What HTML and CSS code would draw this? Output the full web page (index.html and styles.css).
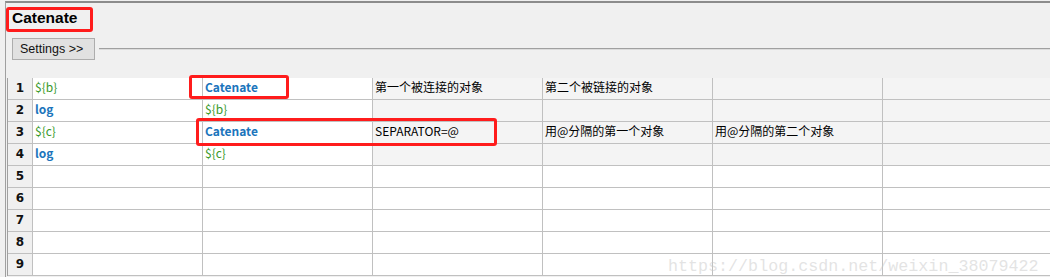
FILE: index.html
```html
<!DOCTYPE html>
<html lang="en">
  <head>
    <meta charset="UTF-8" />
    <title>Catenate</title>
    <link rel="stylesheet" href="styles.css">
  </head>
  <body>
    <div class="panel">
      <h1 class="title">Catenate</h1>

      <div class="settings-row">
        <button class="settings-btn">Settings &gt;&gt;</button>
        <div class="separator"></div>
      </div>

      <!-- Test steps grid -->
      <div class="grid">
        <div class="num">1</div>
        <div class="cell var">${b}</div>
        <div class="cell kw">Catenate</div>
        <div class="cell dim">第一个被连接的对象</div>
        <div class="cell dim">第二个被链接的对象</div>
        <div class="cell dim"></div>
        <div class="cell dim"></div>

        <div class="num">2</div>
        <div class="cell kw">log</div>
        <div class="cell var">${b}</div>
        <div class="cell dim"></div>
        <div class="cell dim"></div>
        <div class="cell dim"></div>
        <div class="cell dim"></div>

        <div class="num">3</div>
        <div class="cell var">${c}</div>
        <div class="cell kw">Catenate</div>
        <div class="cell dim">SEPARATOR=@</div>
        <div class="cell dim">用@分隔的第一个对象</div>
        <div class="cell dim">用@分隔的第二个对象</div>
        <div class="cell dim"></div>

        <div class="num">4</div>
        <div class="cell kw">log</div>
        <div class="cell var">${c}</div>
        <div class="cell dim"></div>
        <div class="cell dim"></div>
        <div class="cell dim"></div>
        <div class="cell dim"></div>

        <div class="num">5</div>
        <div class="cell"></div><div class="cell"></div><div class="cell"></div>
        <div class="cell"></div><div class="cell"></div><div class="cell"></div>

        <div class="num">6</div>
        <div class="cell"></div><div class="cell"></div><div class="cell"></div>
        <div class="cell"></div><div class="cell"></div><div class="cell"></div>

        <div class="num">7</div>
        <div class="cell"></div><div class="cell"></div><div class="cell"></div>
        <div class="cell"></div><div class="cell"></div><div class="cell"></div>

        <div class="num">8</div>
        <div class="cell"></div><div class="cell"></div><div class="cell"></div>
        <div class="cell"></div><div class="cell"></div><div class="cell"></div>

        <div class="num">9</div>
        <div class="cell"></div><div class="cell"></div><div class="cell"></div>
        <div class="cell"></div><div class="cell"></div><div class="cell"></div>
      </div>
    </div>

    <!-- Annotations drawn over the screenshot -->
    <div class="mark mark-title"></div>
    <div class="mark mark-row1"></div>
    <div class="mark mark-row3"></div>

    <div class="watermark">https://blog.csdn.net/weixin_38079422</div>
  </body>
</html>
```

FILE: styles.css
```css
:root {
  --panel-bg: #f0f0f0;
  --grid-line: #c0c0c0;
  --dim-cell: #f4f4f4;
  --keyword: #1b75bc;
  --variable: #3a9a2a;
  --mark-red: #ff1c1c;
}

* {
  margin: 0;
  padding: 0;
  box-sizing: border-box;
}

body {
  position: relative;
  width: 1050px;
  height: 277px;
  overflow: hidden;
  background-color: var(--panel-bg);
  font-family: "Liberation Sans", Arial, sans-serif;
  color: #000;
}

.panel {
  margin: 1px 0 0 5px;
  height: 276px;
  border-top: 2px solid #8c8c8c;
  border-left: 1px solid #a0a0a0;
  overflow: hidden;
}

.title {
  padding: 5px 0 0 6px;
  font-size: 15.5px;
  line-height: 20px;
  font-weight: bold;
}

.settings-row {
  display: flex;
  align-items: center;
  margin: 10px 0 0 6px;
  height: 22px;
}

.settings-btn {
  width: 83px;
  height: 22px;
  padding-left: 7px;
  text-align: left;
  border: 1px solid #adadad;
  background: #e1e1e1;
  font-family: "Liberation Sans", Arial, sans-serif;
  font-size: 12.5px;
  color: #111;
}

.separator {
  flex: 1;
  height: 2px;
  margin-left: 4px;
  border-top: 1px solid #a0a0a0;
  border-bottom: 1px solid #dcdcdc;
}

/* Grid */
.grid {
  display: grid;
  grid-template-columns: 25px repeat(6, 170px);
  grid-auto-rows: 22px;
  margin: 18px 0 0 1px;
  border-left: 1px solid #a0a0a0;
  width: 1200px;
}

.num,
.cell {
  border-right: 1px solid var(--grid-line);
  border-bottom: 1px solid var(--grid-line);
  white-space: nowrap;
  overflow: hidden;
}

.num {
  text-align: center;
  font-family: "DejaVu Sans", sans-serif;
  font-weight: bold;
  font-size: 12px;
  line-height: 21px;
  color: #111;
}

.cell {
  background: #ffffff;
  padding-left: 2px;
  font-family: "Noto Sans CJK SC", sans-serif;
  font-size: 12px;
  line-height: 17px;
}

.cell.dim {
  background: var(--dim-cell);
}

.cell.kw {
  color: var(--keyword);
  font-weight: bold;
}

.cell.var {
  color: var(--variable);
}

/* Red annotation boxes */
.mark {
  position: absolute;
  border: 3px solid var(--mark-red);
  border-radius: 3px;
}

.mark-title {
  left: 6px;
  top: 7px;
  width: 87px;
  height: 25px;
}

.mark-row1 {
  left: 189px;
  top: 75px;
  width: 100px;
  height: 24px;
}

.mark-row3 {
  left: 196px;
  top: 118px;
  width: 301px;
  height: 28px;
}

.watermark {
  position: absolute;
  left: 668px;
  top: 257px;
  font-family: "Liberation Mono", monospace;
  font-size: 16.7px;
  line-height: 20px;
  color: rgba(200, 200, 200, 0.5);
  white-space: nowrap;
}
```
